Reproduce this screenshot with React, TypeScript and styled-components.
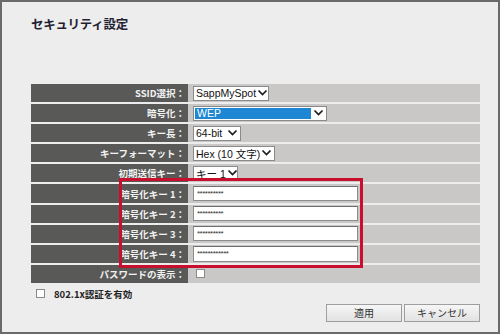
import React from "react";
import styled, { createGlobalStyle } from "styled-components";

const Global = createGlobalStyle`
  html, body { margin: 0; padding: 0; background: #ededed; }
  * { box-sizing: border-box; }
`;

const JP = `"Noto Sans CJK JP", "Noto Sans", sans-serif`;
const UI = `"Liberation Sans", "Noto Sans CJK JP", sans-serif`;

const Frame = styled.div`
  width: 500px;
  height: 334px;
  border: 2px solid #6a6a6a;
  background: #ededed;
  padding: 14px 18px 0 29px;
  display: flex;
  flex-direction: column;
`;

const Title = styled.h1`
  margin: 0;
  font-family: ${JP};
  font-size: 12.5px;
  line-height: 15px;
  font-weight: 700;
  color: #1f2233;
  letter-spacing: -0.3px;
`;

const TableWrap = styled.div`
  position: relative;
  margin-top: 53px;
  width: 449px;
  display: flex;
  flex-direction: column;
  gap: 2px;
`;

const Row = styled.div`
  display: grid;
  grid-template-columns: 157px 1fr;
  height: 18.1px;
`;

const Label = styled.div`
  background: #595957;
  color: #f2f2f2;
  font-family: ${JP};
  font-size: 9.5px;
  font-weight: 700;
  display: flex;
  align-items: center;
  justify-content: flex-end;
  padding-right: 3px;
  white-space: nowrap;
`;

const Value = styled.div`
  background: #c9c8c6;
  display: flex;
  align-items: center;
  padding-left: 5px;
`;

const SelectBox = styled.div<{ $w: number }>`
  width: ${(p) => p.$w}px;
  height: 15px;
  background: #fff;
  border: 1px solid #8a8a8a;
  display: flex;
  align-items: center;
  font-family: ${UI};
  font-size: 10.5px;
  color: #111;
  white-space: nowrap;
  overflow: hidden;
`;

const SelectText = styled.span<{ $hl?: boolean }>`
  flex: 1;
  align-self: stretch;
  display: flex;
  align-items: center;
  padding-left: 2px;
  margin: ${(p) => (p.$hl ? "1px" : "0")};
  background: ${(p) => (p.$hl ? "#1e87d3" : "transparent")};
  color: ${(p) => (p.$hl ? "#ffffff" : "#111")};
`;

const Chevron = styled.svg`
  flex: none;
  width: 13px;
  height: 8px;
  margin-right: 1px;
`;

const KeyInput = styled.div`
  width: 165px;
  height: 15.5px;
  background: #fff;
  border: 1px solid #8c8c8c;
  border-top-color: #6e6e6e;
  display: flex;
  align-items: center;
  padding-left: 3px;
  font-family: ${UI};
  font-size: 8px;
  letter-spacing: -0.5px;
  color: #333;
`;

const Check = styled.span<{ $size: number }>`
  display: inline-block;
  flex: none;
  width: ${(p) => p.$size}px;
  height: ${(p) => p.$size}px;
  background: #fff;
  border: 1px solid #8a8a8a;
`;

const RedBox = styled.div`
  position: absolute;
  left: 88px;
  top: 94px;
  width: 244px;
  height: 90px;
  border: 3px solid #c8102e;
  pointer-events: none;
`;

const OptionRow = styled.label`
  display: flex;
  align-items: center;
  gap: 9px;
  margin-top: 4px;
  padding-left: 5px;
  font-family: ${JP};
  font-size: 9.5px;
  font-weight: 700;
  color: #222;
`;

const Buttons = styled.div`
  display: flex;
  justify-content: flex-end;
  gap: 2px;
  width: 449px;
  margin-top: 3px;
`;

const Button = styled.button`
  width: 76px;
  height: 18px;
  padding: 0;
  border: 1px solid #9e9e9e;
  background: linear-gradient(#f6f6f6, #e2e2e2);
  font-family: ${JP};
  font-size: 10px;
  color: #333;
`;

const ChevronIcon = () => (
  <Chevron viewBox="0 0 13 8">
    <path d="M2.5 1.5 L6.5 5.5 L10.5 1.5" fill="none" stroke="#1a1a1a" strokeWidth="1.7" />
  </Chevron>
);

const Select = ({ w, text, hl }: { w: number; text: string; hl?: boolean }) => (
  <SelectBox $w={w}>
    <SelectText $hl={hl}>{text}</SelectText>
    <ChevronIcon />
  </SelectBox>
);

const keys = ["**********", "**********", "**********", "************"];

export default function App() {
  return (
    <>
      <Global />
      <Frame>
        <Title>セキュリティ設定</Title>
        <TableWrap>
          <Row>
            <Label>SSID選択：</Label>
            <Value>
              <Select w={76} text="SappMySpot" />
            </Value>
          </Row>
          <Row>
            <Label>暗号化：</Label>
            <Value>
              <Select w={134} text="WEP" hl />
            </Value>
          </Row>
          <Row>
            <Label>キー長：</Label>
            <Value>
              <Select w={48} text="64-bit" />
            </Value>
          </Row>
          <Row>
            <Label>キーフォーマット：</Label>
            <Value>
              <Select w={82} text="Hex (10 文字)" />
            </Value>
          </Row>
          <Row>
            <Label>初期送信キー：</Label>
            <Value>
              <Select w={45} text="キー 1" />
            </Value>
          </Row>
          {keys.map((k, i) => (
            <Row key={i}>
              <Label>暗号化キー {i + 1}：</Label>
              <Value>
                <KeyInput>{k}</KeyInput>
              </Value>
            </Row>
          ))}
          <Row>
            <Label>パスワードの表示：</Label>
            <Value>
              <Check $size={9} style={{ marginLeft: 3 }} />
            </Value>
          </Row>
          <RedBox />
        </TableWrap>
        <OptionRow>
          <Check $size={9} />
          802.1x認証を有効
        </OptionRow>
        <Buttons>
          <Button>適用</Button>
          <Button>キャンセル</Button>
        </Buttons>
      </Frame>
    </>
  );
}
